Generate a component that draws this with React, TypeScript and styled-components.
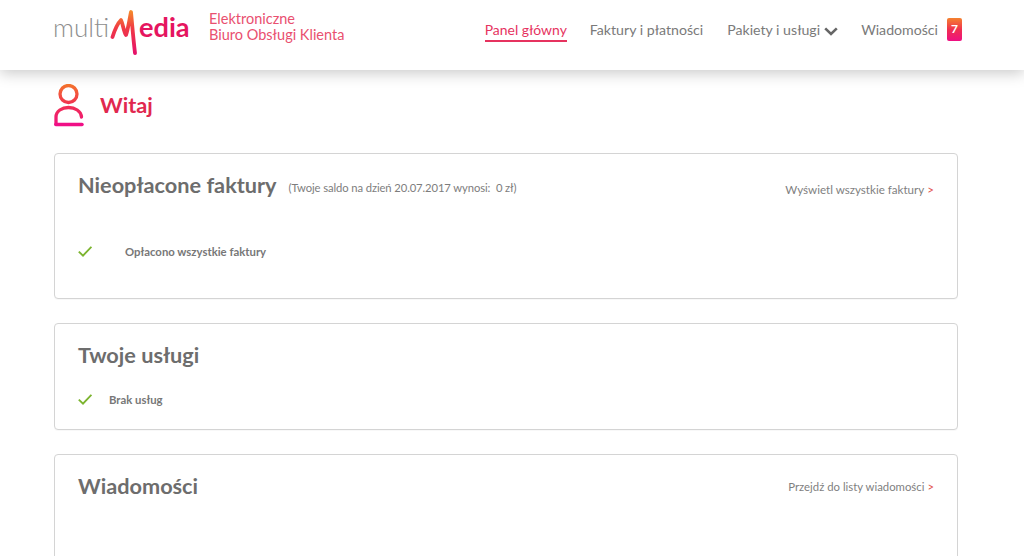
import React from "react";
import styled, { createGlobalStyle } from "styled-components";

const Global = createGlobalStyle`
  html, body { margin: 0; padding: 0; background: #fff; height: 556px; overflow: hidden; }
  * { box-sizing: border-box; }
  body { font-family: Lato, "Liberation Sans", sans-serif; color: #6f6f6f; }
`;

const Header = styled.header`
  height: 70px;
  background: #fff;
  display: flex;
  align-items: flex-start;
  padding-left: 54px;
  box-shadow: 0 3px 14px rgba(0, 0, 0, 0.22);
  position: relative;
`;
const Logo = styled.div`
  display: flex;
  align-items: flex-start;
  width: 135px;
  height: 56px;
  padding-top: 7px;
`;
const LogoThin = styled.span`
  width: 57px;
  flex: none;
  margin-left: -1px;
  font-size: 26px;
  font-weight: 300;
  line-height: 40px;
  color: #8e8e8e;
`;
const LogoBold = styled.span`
  font-size: 27.2px;
  font-weight: 700;
  line-height: 40px;
  color: #e5155f;
`;
const LogoMark = styled.svg`
  flex: none;
  margin-top: 2px;
`;
const Tagline = styled.div`
  margin: 11px 0 0 20px;
  font-size: 14.5px;
  line-height: 15.5px;
  color: #e9506f;
  width: 200px;
`;
const Nav = styled.nav`
  margin-left: auto;
  display: flex;
  align-items: flex-start;
  padding-top: 21px;
  padding-right: 62px;
`;
const NavItem = styled.a<{ $active?: boolean; $gap: number }>`
  display: flex;
  align-items: center;
  height: 21px;
  font-size: ${(p) => (p.$active ? 13.95 : 14.15)}px;
  line-height: 18px;
  margin-right: ${(p) => p.$gap}px;
  white-space: nowrap;
  color: ${(p) => (p.$active ? "#e6335f" : "#7a7a7a")};
  border-bottom: 2px solid ${(p) => (p.$active ? "#e6335f" : "transparent")};
  padding-bottom: 1px;
`;
const ChevronIcon = styled.svg`
  margin: 2px 0 0 4px;
`;
const Badge = styled.span`
  width: 15px;
  height: 23px;
  margin: -2px 0 0 9px;
  border-radius: 2px;
  background: linear-gradient(180deg, #f4822e 0%, #f0304f 50%, #ee0f83 100%);
  color: #fff;
  font-size: 12px;
  font-weight: 700;
  display: flex;
  align-items: center;
  justify-content: center;
`;
const Main = styled.main`
  width: 904px;
  margin-left: 54px;
  display: flex;
  flex-direction: column;
`;
const Greeting = styled.div`
  display: flex;
  align-items: flex-start;
  height: 83px;
  gap: 16px;
  padding-top: 14px;
`;
const GreetingText = styled.h1`
  margin: 7px 0 0;
  font-size: 21.7px;
  font-weight: 700;
  color: #e1284f;
  line-height: 28px;
`;
const Card = styled.section<{ $h: number; $mb: number }>`
  height: ${(p) => p.$h}px;
  margin-bottom: ${(p) => p.$mb}px;
  border: 1px solid #d4d4d4;
  border-radius: 4px;
  background: #fff;
  flex: none;
  padding: 0 23px;
  box-shadow: 0 1px 1px rgba(0, 0, 0, 0.03);
`;
const CardHead = styled.div<{ $h: number }>`
  height: ${(p) => p.$h}px;
  display: flex;
  align-items: center;
`;
const Title = styled.h2`
  margin: -2px 0 0;
  font-size: 21.7px;
  font-weight: 700;
  color: #6d6d6d;
  line-height: 28px;
  white-space: nowrap;
`;
const Sub = styled.span`
  margin: 3px 0 0 12px;
  font-size: 11.25px;
  letter-spacing: -0.1px;
  color: #7d7d7d;
`;
const HeadLink = styled.a<{ $up: number; $size: number }>`
  margin: ${(p) => p.$up}px 0 0 auto;
  font-size: ${(p) => p.$size}px;
  color: #7f7f7f;
  white-space: nowrap;
`;
const Arrow = styled.span`
  color: #e2504b;
  margin-left: 3px;
`;
const Row = styled.div<{ $top: number; $gap: number }>`
  display: flex;
  align-items: center;
  margin-top: ${(p) => p.$top}px;
  gap: ${(p) => p.$gap}px;
  font-size: 11.35px;
  font-weight: 700;
  color: #777;
  height: 16px;
`;

const Check = () => (
  <svg width="14" height="11" viewBox="0 0 14 11" fill="none">
    <path d="M0.8 5.6 L5 9.6 L13.4 0.8" stroke="#7cb42f" strokeWidth="1.9" />
  </svg>
);

const Chevron = () => (
  <ChevronIcon width="14" height="9" viewBox="0 0 14 9" fill="none">
    <path d="M1.2 1.4 L7 7 L12.8 1.4" stroke="#666" strokeWidth="2.6" />
  </ChevronIcon>
);

const LogoM = () => (
  <LogoMark width="29" height="46" viewBox="0 0 29 46" fill="none">
    <defs>
      <linearGradient id="lm" gradientUnits="userSpaceOnUse" x1="0" y1="2" x2="0" y2="45">
        <stop offset="0" stopColor="#f58a2a" />
        <stop offset="0.4" stopColor="#f03a45" />
        <stop offset="1" stopColor="#e5106a" />
      </linearGradient>
    </defs>
    <path
      d="M2.5 28 C5 20 8 14 11 11 C13 15 13.5 22 16 26 C18 21 19.5 10 21 3 C22 14 23.5 32 25 44"
      stroke="url(#lm)"
      strokeWidth="3.8"
      strokeLinecap="round"
      strokeLinejoin="round"
    />
  </LogoMark>
);

const PersonIcon = () => (
  <svg width="30" height="44" viewBox="0 0 30 44" fill="none">
    <defs>
      <linearGradient id="pg" gradientUnits="userSpaceOnUse" x1="0" y1="0" x2="0" y2="44">
        <stop offset="0" stopColor="#f5762c" />
        <stop offset="0.45" stopColor="#f0324f" />
        <stop offset="1" stopColor="#f00f86" />
      </linearGradient>
    </defs>
    <circle cx="14.5" cy="10" r="8.5" stroke="url(#pg)" strokeWidth="3.3" />
    <path
      d="M2 40 V33 C2 27 8 23.5 14.5 23.5 C21 23.5 27 27 27.5 33"
      stroke="url(#pg)"
      strokeWidth="3.3"
      strokeLinecap="round"
    />
    <path d="M1.8 40.5 H28" stroke="#f00f86" strokeWidth="3.5" strokeLinecap="round" />
  </svg>
);

export default function App() {
  return (
    <>
      <Global />
      <Header>
        <Logo>
          <LogoThin>multi</LogoThin>
          <LogoM />
          <LogoBold>edia</LogoBold>
        </Logo>
        <Tagline>
          Elektroniczne
          <br />
          Biuro Obsługi Klienta
        </Tagline>
        <Nav>
          <NavItem $active $gap={23}>Panel główny</NavItem>
          <NavItem $gap={24}>Faktury i płatności</NavItem>
          <NavItem $gap={23}>
            Pakiety i usługi
            <Chevron />
          </NavItem>
          <NavItem $gap={0}>
            Wiadomości
            <Badge>7</Badge>
          </NavItem>
        </Nav>
      </Header>
      <Main>
        <Greeting>
          <PersonIcon />
          <GreetingText>Witaj</GreetingText>
        </Greeting>
        <Card $h={146} $mb={24}>
          <CardHead $h={64}>
            <Title>Nieopłacone faktury</Title>
            <Sub>(Twoje saldo na dzień 20.07.2017 wynosi:&nbsp; 0 zł)</Sub>
            <HeadLink $up={6} $size={11.6}>
              Wyświetl wszystkie faktury<Arrow>&gt;</Arrow>
            </HeadLink>
          </CardHead>
          <Row $top={25} $gap={33}>
            <Check />
            <span>Opłacono wszystkie faktury</span>
          </Row>
        </Card>
        <Card $h={107} $mb={24}>
          <CardHead $h={64}>
            <Title>Twoje usługi</Title>
          </CardHead>
          <Row $top={3} $gap={17}>
            <Check />
            <span>Brak usług</span>
          </Row>
        </Card>
        <Card $h={140} $mb={0}>
          <CardHead $h={63}>
            <Title>Wiadomości</Title>
            <HeadLink $up={0} $size={11.35}>
              Przejdź do listy wiadomości<Arrow>&gt;</Arrow>
            </HeadLink>
          </CardHead>
        </Card>
      </Main>
    </>
  );
}
